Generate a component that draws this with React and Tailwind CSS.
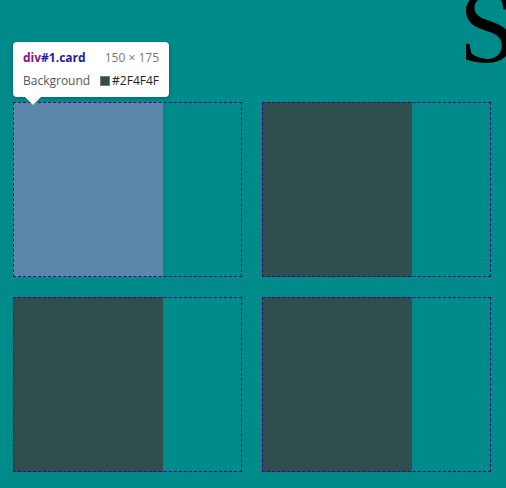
export default function App() {
  const cards = [1, 2, 3, 4];
  return (
    <div className="relative w-[506px] h-[488px] overflow-hidden bg-[#008b8b]">
      <h1 className="absolute left-[459px] top-[-25px] text-[104px] leading-none text-black font-['Liberation_Serif',serif]">
        S
      </h1>

      <div className="pt-[102px] pl-[13px]">
        <div className="grid w-[478px] grid-cols-2 gap-5">
          {cards.map((n) => (
            <div
              key={n}
              className="h-[175px] outline-1 outline-dashed outline-[#4b0082] -outline-offset-1"
            >
              <div className={`card w-[150px] h-[175px] ${n === 1 ? 'bg-[#5b88aa]' : 'bg-[#2f4f4f]'}`} />
            </div>
          ))}
        </div>
      </div>

      {/* inspect tooltip */}
      <div className="absolute left-[13px] top-[42px] w-[156px] rounded-[4px] bg-white px-[10px] py-[6px] shadow-[0_1px_4px_rgba(0,0,0,0.3)] font-['Open_Sans',sans-serif] text-[12px] leading-[20px]">
        <div className="flex justify-between">
          <span className="font-bold">
            <span className="text-[#881280]">div</span>
            <span className="text-[#1a1aa6]">#1.card</span>
          </span>
          <span className="text-[#777]">150 × 175</span>
        </div>
        <div className="mt-[3px] flex justify-between text-[#555]">
          <span>Background</span>
          <span className="flex items-center gap-[2px] text-[#222]">
            <span className="inline-block h-[10px] w-[10px] bg-[#2f4f4f] border border-[#777]" />
            #2F4F4F
          </span>
        </div>
        <div className="absolute left-[12px] top-full h-0 w-0 border-x-[8px] border-t-[8px] border-x-transparent border-t-white" />
      </div>
    </div>
  );
}
